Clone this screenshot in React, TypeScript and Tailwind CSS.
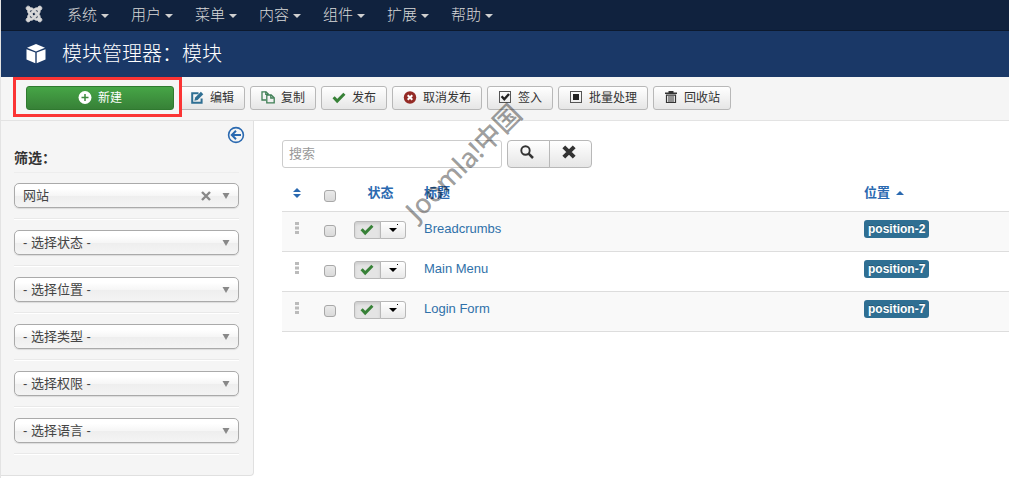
import React from 'react';
import { FaJoomla } from 'react-icons/fa';

const menuItems = ['系统', '用户', '菜单', '内容', '组件', '扩展', '帮助'];

const filters = [
    { id: 'client', label: '网站', clearable: true },
    { id: 'state', label: '- 选择状态 -' },
    { id: 'position', label: '- 选择位置 -' },
    { id: 'module', label: '- 选择类型 -' },
    { id: 'access', label: '- 选择权限 -' },
    { id: 'language', label: '- 选择语言 -' },
];

const modules = [
    { id: 1, title: 'Breadcrumbs', position: 'position-2' },
    { id: 2, title: 'Main Menu', position: 'position-7' },
    { id: 3, title: 'Login Form', position: 'position-7' },
];

function CubeIcon() {
    return (
        <svg viewBox="0 0 20 20" className="w-5 h-5" fill="#fff" aria-hidden="true">
            <path d="M10 0 19 3.8 10 7.4 1 3.8Z" />
            <path d="M0.5 5.2 9.3 8.6V19.2L0.5 15.6Z" />
            <path d="M19.5 5.2 10.7 8.6V19.2L19.5 15.6Z" />
        </svg>
    );
}

function PlusIcon() {
    return (
        <svg viewBox="0 0 14 14" className="w-3.5 h-3.5" aria-hidden="true">
            <circle cx="7" cy="6.5" r="6.5" fill="#fff" />
            <path d="M7 3v7M3.5 6.5h7" stroke="#3d8b3d" strokeWidth="1.5" />
        </svg>
    );
}

function EditIcon() {
    return (
        <svg viewBox="0 0 14 14" className="w-3.5 h-3.5" fill="none" aria-hidden="true">
            <path d="M8.5 2.2H2.2v9.6h9.4V7.5" stroke="#2f6f93" strokeWidth="2" />
            <path d="M4.4 9.8l.8-3.2L10.9 .8l2.4 2.4L7.6 9Z" fill="#2f6f93" />
        </svg>
    );
}

function CopyIcon() {
    return (
        <svg viewBox="0 0 14 14" className="w-3.5 h-3.5" fill="none" stroke="#3f7f55" strokeWidth="1.3" aria-hidden="true">
            <path d="M5 9H1V.8H5l2.5 2.4" />
            <path d="M4.8 .8v2.6h2.7" />
            <path d="M5.8 4h4.4l3 2.8v5H5.8Z" />
            <path d="M9.8 4v3h3" />
        </svg>
    );
}

function UnpublishIcon() {
    return (
        <svg viewBox="0 0 14 14" className="w-3.5 h-3.5" aria-hidden="true">
            <circle cx="7" cy="6.5" r="6.2" fill="#942a25" />
            <path d="M4.7 4.2l4.6 4.6M9.3 4.2L4.7 8.8" stroke="#fff" strokeWidth="2" />
        </svg>
    );
}

function CheckinIcon() {
    return (
        <svg viewBox="0 0 14 14" className="w-3.5 h-3.5" fill="none" aria-hidden="true">
            <rect x="1.5" y="0.5" width="11" height="11" stroke="#555" />
            <path d="M3.6 5.2l2.7 3 4.7-5.2" stroke="#222" strokeWidth="2.4" />
        </svg>
    );
}

function BatchIcon() {
    return (
        <svg viewBox="0 0 14 14" className="w-3.5 h-3.5" fill="none" aria-hidden="true">
            <rect x="1.5" y="0.5" width="11" height="11" stroke="#555" />
            <rect x="4" y="3" width="6" height="6" fill="#222" />
        </svg>
    );
}

function TrashIcon() {
    return (
        <svg viewBox="0 0 14 14" className="w-3.5 h-3.5" fill="none" stroke="#333" aria-hidden="true">
            <path d="M4.5 .8h5M1 2.2h12" strokeWidth="1.6" />
            <path d="M2.5 4.2h9v7.3h-9Z" strokeWidth="1.2" />
            <path d="M5 5v6M7 5v6M9 5v6" strokeWidth="1" />
        </svg>
    );
}

function CheckIcon() {
    return (
        <svg viewBox="0 0 14 12" className="w-3.5 h-3" fill="none" aria-hidden="true">
            <path d="M1.6 5.2l3.6 3.9 7.2-7.4" stroke="#378137" strokeWidth="3" />
        </svg>
    );
}

const toolbarButtons = [
    { label: '编辑', icon: <EditIcon /> },
    { label: '复制', icon: <CopyIcon /> },
    { label: '发布', icon: <CheckIcon /> },
    { label: '取消发布', icon: <UnpublishIcon /> },
    { label: '签入', icon: <CheckinIcon /> },
    { label: '批量处理', icon: <BatchIcon /> },
    { label: '回收站', icon: <TrashIcon /> },
];

function Checkbox({ label }: { label: string }) {
    return (
        <input
            type="checkbox"
            aria-label={label}
            className="block appearance-none mx-auto w-3 h-3 border border-[#a8a8a8] rounded-[3px] bg-linear-to-b from-[#eaeaea] to-[#dadada] checked:bg-[#378137]"
        />
    );
}

function NavBar() {
    return (
        <nav className="flex items-center h-[31px] pl-6 bg-[#10223e] border-b border-[#0c192e]">
            <a href="#" aria-label="Joomla" className="mr-6 w-[18px] pb-0.5">
                <FaJoomla className="w-[18px] h-[18px] text-[#d9d9d9] stroke-[#d9d9d9] stroke-[24px]" />
            </a>
            <ul className="flex">
                {menuItems.map((item) => (
                    <li key={item} className="w-16">
                        <a href="#" className="flex items-center text-[15px] leading-5 font-light text-[#d9d9d9]">
                            {item}
                            <svg viewBox="0 0 8 4" className="w-2 h-1 ml-1 mt-0.5" fill="#d0d0d0" aria-hidden="true">
                                <path d="M0 0h8L4 4Z" />
                            </svg>
                        </a>
                    </li>
                ))}
            </ul>
        </nav>
    );
}

function Toolbar() {
    return (
        <div className="flex gap-[5px] pl-[25px] pt-[9px] pb-2.5 bg-[#f5f5f5] border-b border-[#e3e3e3]">
            <div className="relative">
                <button className="flex items-center justify-center gap-1.5 w-[148px] h-6 rounded-[3px] border border-[#2f7a2f] bg-linear-to-b from-[#46a546] to-[#378137] text-xs text-white">
                    <PlusIcon />
                    新建
                </button>
                {/* Highlight around the primary action */}
                <div className="absolute z-10 -left-[13px] -right-2 -top-[9px] -bottom-[7px] border-[3px] border-[#fb3434] pointer-events-none"></div>
            </div>
            {toolbarButtons.map((button) => (
                <button
                    key={button.label}
                    className="flex items-center h-6 px-2.5 rounded-[3px] border border-[#b8b8b8] bg-linear-to-b from-white to-[#e6e6e6] text-xs text-[#333]"
                >
                    <span className="w-5">{button.icon}</span>
                    {button.label}
                </button>
            ))}
        </div>
    );
}

function Sidebar() {
    return (
        <aside className="w-[253px] shrink-0 pl-[13px] pr-3.5 pb-5 bg-[#f5f5f5] border-r border-b border-[#e0e0e0] rounded-br-[4px]">
            <div className="flex justify-end pt-[5px] -mr-1.5">
                <button aria-label="隐藏侧边栏">
                    <svg viewBox="0 0 18 18" className="w-[18px] h-[18px]" fill="none" stroke="#2a69b0" aria-hidden="true">
                        <circle cx="9" cy="9" r="7.4" strokeWidth="1.6" />
                        <path d="M14 9H5M9 4.8 4.8 9 9 13.2" strokeWidth="2" />
                    </svg>
                </button>
            </div>
            <h4 className="pt-1 pb-1 text-sm leading-5 font-bold text-[#333] border-b border-[#ededed]">筛选：</h4>
            <div className="pt-2.5">
                {filters.map((filter) => (
                    <div key={filter.id} className="pb-[11px] mb-2.5 border-b border-white last:mb-0 shadow-[inset_0_-1px_0_#e9e9e9]">
                        <div className="relative">
                            <select
                                aria-label={filter.label}
                                className="block appearance-none w-full h-[25px] px-2 rounded-[5px] border border-[#aaa] bg-[linear-gradient(#fff_20%,#f6f6f6_50%,#eee_52%,#f4f4f4_100%)] shadow-[0_1px_1px_rgba(0,0,0,0.1)] text-[13px] text-[#444]"
                            >
                                <option>{filter.label}</option>
                            </select>
                            {filter.clearable && (
                                <button aria-label="清除" className="absolute right-7 top-2">
                                    <svg viewBox="0 0 10 10" className="w-2.5 h-2.5" stroke="#888" strokeWidth="2.4" aria-hidden="true">
                                        <path d="M1 1l8 8M9 1L1 9" />
                                    </svg>
                                </button>
                            )}
                            <svg viewBox="0 0 8 6" className="absolute right-[9px] top-2.5 w-2 h-1.5 pointer-events-none" fill="#888" aria-hidden="true">
                                <path d="M0.5 0h7L4 6Z" />
                            </svg>
                        </div>
                    </div>
                ))}
            </div>
        </aside>
    );
}

function SearchBar() {
    return (
        <div className="flex gap-[5px]">
            <input
                type="text"
                aria-label="搜索"
                placeholder="搜索"
                className="w-[220px] h-7 px-1.5 pb-0.5 rounded-[3px] border border-[#ccc] bg-white text-[13px] placeholder:text-[#999]"
            />
            <div className="flex">
                <button aria-label="搜索" className="flex items-center justify-center w-[43px] h-7 rounded-l-[4px] border border-[#b8b8b8] bg-linear-to-b from-white to-[#e6e6e6]">
                    <svg viewBox="0 0 14 14" className="w-3.5 h-3.5 mr-1 mb-1" fill="none" stroke="#333" aria-hidden="true">
                        <circle cx="5.5" cy="5.5" r="4.2" strokeWidth="1.9" />
                        <path d="M8.6 8.6 13 13" strokeWidth="2.5" />
                    </svg>
                </button>
                <button aria-label="清除" className="flex items-center justify-center w-[43px] h-7 -ml-px rounded-r-[4px] border border-[#b8b8b8] bg-linear-to-b from-white to-[#e6e6e6]">
                    <svg viewBox="0 0 14 14" className="w-3.5 h-3.5 mr-1 mb-1" stroke="#333" strokeWidth="4" aria-hidden="true">
                        <path d="M1.8 1.8l10.4 10.4M12.2 1.8L1.8 12.2" />
                    </svg>
                </button>
            </div>
        </div>
    );
}

function ModuleTable() {
    return (
        <table className="w-full table-fixed text-[13px] leading-[18px]">
            <colgroup>
                <col className="w-[30px]" />
                <col className="w-[35px]" />
                <col className="w-[69px]" />
                <col />
                <col className="w-[153px]" />
            </colgroup>
            <thead>
                <tr className="h-[43px] align-top text-[#2a69b0]">
                    <th className="pt-5">
                        <svg viewBox="0 0 8 10" className="w-2 h-2.5 mx-auto" fill="#2a69b0" aria-hidden="true">
                            <path d="M4 0 8 4H0ZM0 6h8L4 10Z" />
                        </svg>
                    </th>
                    <th className="pt-[22px]"><Checkbox label="全选" /></th>
                    <th className="pt-4 pr-0.5 font-bold"><a href="#">状态</a></th>
                    <th className="pt-4 px-2 text-left font-bold"><a href="#">标题</a></th>
                    <th className="pt-4 px-2 text-left font-bold">
                        <a href="#" className="flex items-center">
                            位置
                            <svg viewBox="0 0 8 4" className="w-2 h-1 ml-1.5" fill="#2a69b0" aria-hidden="true">
                                <path d="M0 4h8L4 0Z" />
                            </svg>
                        </a>
                    </th>
                </tr>
            </thead>
            <tbody>
                {modules.map((item) => (
                    <tr key={item.id} className="h-10 align-top border-t border-[#ddd] last:border-b odd:bg-[#f9f9f9]">
                        <td className="pt-2.5">
                            <svg viewBox="0 0 4 12" className="w-1 h-3 mx-auto" fill="#bbb" aria-hidden="true">
                                <path d="M0 0h4v3H0ZM0 4.5h4v3H0ZM0 9h4v3H0Z" />
                            </svg>
                        </td>
                        <td className="pt-[13px]"><Checkbox label={item.title} /></td>
                        <td className="pt-[9px] pr-1">
                            <div className="flex justify-center">
                                <button aria-label="停用" className="flex items-center justify-center w-[27px] h-[18px] rounded-l-[3px] border border-[#b8b8b8] bg-[#e4e4e4] shadow-[inset_0_2px_3px_rgba(0,0,0,0.1)]">
                                    <CheckIcon />
                                </button>
                                <button aria-label="操作" className="flex items-center justify-center w-[26px] h-[18px] -ml-px rounded-r-[3px] border border-[#b8b8b8] bg-linear-to-b from-white to-[#e9e9e9]">
                                    <svg viewBox="0 0 14 12" className="w-3.5 h-3" fill="#000" aria-hidden="true">
                                        <path d="M3 4h8L7 8ZM11 0h1v1h-1Z" />
                                    </svg>
                                </button>
                            </div>
                        </td>
                        <td className="px-2 pt-2"><a href="#" className="text-[#3071a9]">{item.title}</a></td>
                        <td className="px-2 pt-2">
                            <span className="inline-block px-1 rounded-[3px] bg-[#2f6f93] text-xs leading-[18px] font-bold text-white [text-shadow:0_-1px_0_rgba(0,0,0,0.25)]">
                                {item.position}
                            </span>
                        </td>
                    </tr>
                ))}
            </tbody>
        </table>
    );
}

export default function App() {
    return (
        <div className="min-h-screen bg-white border-l border-[#e3e3e3] font-['Liberation_Sans','Noto_Sans_CJK_SC',sans-serif]">
            <NavBar />
            <header className="flex items-center gap-4 h-[46px] pl-[25px] bg-[#1a3867]">
                <CubeIcon />
                <h1 className="text-xl font-light text-white">模块管理器：模块</h1>
            </header>
            <Toolbar />
            <div className="flex">
                <Sidebar />
                <main className="relative flex-1 min-w-0 pl-7 pt-[19px]">
                    <SearchBar />
                    <ModuleTable />
                    {/* Watermark */}
                    <div className="absolute left-[134px] top-[21px] -rotate-45 whitespace-nowrap text-[27px] leading-10 font-medium text-black/40 pointer-events-none font-['Noto_Sans','Noto_Sans_CJK_SC',sans-serif]">
                        Joomla!中国
                    </div>
                </main>
            </div>
        </div>
    );
}
